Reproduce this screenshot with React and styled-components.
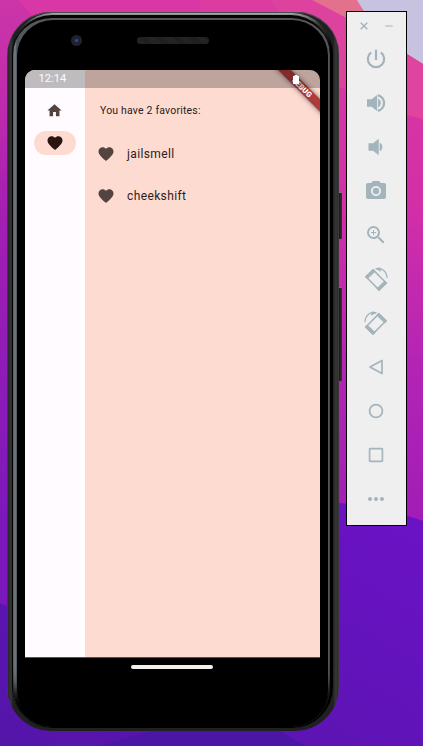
import React from "react";
import styled, { createGlobalStyle } from "styled-components";
import {
  MdHome,
  MdFavorite,
  MdCameraAlt,
  MdZoomIn,
  MdMoreHoriz,
} from "react-icons/md";

const GlobalStyle = createGlobalStyle`
  * { box-sizing: border-box; }
  body { margin: 0; font-family: Roboto, sans-serif; }
`;

const Desktop = styled.main`
  position: relative;
  display: flex;
  align-items: flex-start;
  gap: 7px;
  width: 423px;
  height: 746px;
  padding: 11px 0 0 7px;
  overflow: hidden;
  isolation: isolate;
`;

const WallpaperArt = styled.svg`
  position: absolute;
  inset: 0;
  z-index: -1;
`;

const Shell = styled.section`
  position: relative;
  width: 332px;
  height: 719px;
  margin-top: 1px;
  padding: 1px 6px 3px 5px;
  border-radius: 44px 42px 44px 44px;
  background: linear-gradient(90deg, #4b4b43 0, #292929 1px, #363636 4px, #202020 6px, #202020 326px, #383838 329px, #2a2a2a 331px, #4a4a43 332px);
  box-shadow: inset 0 1px 0 #4b4d4e;
`;

const Groove = styled.div`
  height: 100%;
  padding: 2px 3px 1px 1px;
  border-radius: 41px;
  background: linear-gradient(#aeb1b3 0, #85888a 2px, #333 12px, #000 34px);
`;

const Rim = styled.div`
  height: 100%;
  padding: 2px 2px 0 4px;
  border-radius: 39px;
  background: linear-gradient(90deg, #565e63 0, #7a848a 2px, #4a5359 4px, #55585b 8px, #55585b 312px, #56585a 316px, #444 317px);
  box-shadow: inset 0 -28px 12px -8px #000;
  border-top: 3px solid #050505;
`;

const Face = styled.div`
  display: flex;
  flex-direction: column;
  height: 100%;
  padding: 0 8px;
  border-radius: 36px 36px 38px 38px;
  background: #000;
`;

const Forehead = styled.header`
  display: flex;
  align-items: center;
  height: 50px;
  flex: none;
  padding: 0 0 10px 46px;
  gap: 55px;
`;

const Camera = styled.div`
  width: 11px;
  height: 11px;
  border: 2px solid #242427;
  border-radius: 50%;
  background: radial-gradient(circle, #405088 0, #1d2347 50%, #151723 80%);
`;

const Speaker = styled.div`
  width: 72px;
  height: 7px;
  border-radius: 4px;
  background: repeating-linear-gradient(45deg, #252827 0 1px, #1b1d1d 1px 2px);
`;

const Screen = styled.div`
  position: relative;
  display: flex;
  width: 295px;
  height: 587px;
  flex: none;
  overflow: hidden;
  border-radius: 10px 10px 0 0;
  background: #fedbd1;
`;

const StatusBar = styled.div`
  position: absolute;
  inset: 0 0 auto;
  display: flex;
  justify-content: space-between;
  align-items: center;
  height: 18px;
  padding: 0 21px 0 13.5px;
  background: rgba(0, 0, 0, 0.25);
  color: #fff;
  font-size: 11.2px;
`;

const Clock = styled.time`
  line-height: 18px;
  opacity: 0.94;
`;

const Ribbon = styled.div`
  position: absolute;
  top: 13px;
  left: 242px;
  width: 70px;
  height: 9px;
  transform: rotate(45deg);
  background: #ad3b38;
  box-shadow: 0 0 5px rgba(0, 0, 0, 0.55);
  color: #fff;
  font-size: 7.6px;
  font-weight: 900;
  line-height: 9px;
  text-align: center;
`;

const Rail = styled.nav`
  display: flex;
  flex-direction: column;
  align-items: center;
  gap: 9px;
  width: 60px;
  padding: 28px 1px 0 0;
  background: #fffbff;
`;

const Destination = styled.div`
  display: grid;
  place-items: center;
  width: 42px;
  height: 24px;
  border-radius: 12px;
  background: ${({ $active }) => ($active ? "#fedbd1" : "transparent")};
  color: ${({ $active }) => ($active ? "#2b1510" : "#534440")};
`;

const Favorites = styled.div`
  flex: 1;
  padding-top: 33px;
  color: #2b211e;
`;

const Heading = styled.h1`
  margin: 0 0 15px 15px;
  font-size: 10.5px;
  font-weight: 400;
  line-height: 15px;
  letter-spacing: 0.18px;
`;

const Row = styled.div`
  display: flex;
  align-items: center;
  gap: 12px;
  height: 42px;
  padding: 0 0 1px 12px;
  font-size: 12px;
  letter-spacing: 0.38px;

  svg { color: #534440; flex: none; }
`;

const Chin = styled.footer`
  display: flex;
  justify-content: center;
  padding: 7px 1px 0 0;
  border-top: 1px solid #555;
`;

const HomeBar = styled.div`
  width: 82px;
  height: 4px;
  border-radius: 2px;
  background: #f3f1f0;
`;

const SideKey = styled.i`
  position: absolute;
  left: 332px;
  top: ${({ $top }) => $top}px;
  width: 3px;
  height: ${({ $length }) => $length}px;
  border-radius: 0 1px 1px 0;
  border-top: 1px solid #777;
  background: linear-gradient(90deg, #191919, #343434);
`;

const Toolbar = styled.aside`
  display: flex;
  flex-direction: column;
  align-items: center;
  width: 61px;
  height: 515px;
  padding: 8px 1px 0 0;
  border: 1px solid #000;
  background: #efefef;
  color: #a4b4bc;
`;

const WindowControls = styled.div`
  display: flex;
  justify-content: space-between;
  align-items: center;
  width: 37px;
  height: 12px;
  margin-bottom: 5px;
`;

const Tool = styled.button`
  display: grid;
  place-items: center;
  flex: none;
  width: 44px;
  height: 44px;
  padding: 0;
  border: 0;
  background: none;
  color: inherit;

  svg { display: block; overflow: visible; }
`;

function Wallpaper() {
  return (
    <WallpaperArt width="423" height="746" viewBox="0 0 423 746" aria-hidden="true">
      <defs>
        <linearGradient id="magenta" x1="0" y1="0" x2="0" y2="1">
          <stop offset="0" stopColor="#cc35a8" />
          <stop offset=".15" stopColor="#be2aae" />
          <stop offset=".28" stopColor="#a41fb3" />
          <stop offset=".7" stopColor="#7b18bb" />
        </linearGradient>
        <linearGradient id="right" x1="0" y1="0" x2="0" y2="1">
          <stop offset="0" stopColor="#dc3ca0" />
          <stop offset=".4" stopColor="#d22ea8" />
          <stop offset=".7" stopColor="#b324b5" />
          <stop offset="1" stopColor="#a01db5" />
        </linearGradient>
        <linearGradient id="violet" x1="0" y1="1" x2="1" y2="0">
          <stop offset="0" stopColor="#5415a8" />
          <stop offset="1" stopColor="#6c12c7" />
        </linearGradient>
      </defs>
      <path fill="url(#magenta)" d="M0 0H423V746H0z" />
      <path fill="#d936a6" d="M18 0H330V20H36z" />
      <path fill="url(#right)" d="M200 0H423V525H200z" />
      <path fill="#dd439e" d="M270 0H423V119L339 87z" />
      <path fill="#e3708d" d="M312 0H358L370 30Z" />
      <path fill="#c6c2df" d="M357 0H423V64L407 54L364 12z" />
      <path fill="#df459f" d="M407 54L423 64V119L407 115z" />
      <path fill="url(#violet)" d="M0 603L7 606Q120 480 339 503Q382 506 423 521V746H0z" />
      <path fill="#4b16a5" d="M150 731H280L305 746H100z" />
    </WallpaperArt>
  );
}

function RotateGlyph({ mirrored = false }) {
  return (
    <svg width="24" height="24" viewBox="0 0 24 24" fill="none" stroke="currentColor">
      <g transform={mirrored ? "translate(24 0) scale(-1 1)" : undefined}>
        <path strokeWidth="1.5" strokeLinejoin="round" d="M9.2 2.9L2 9.8L15 22.9L22.2 16z" />
        <path fill="currentColor" strokeWidth=".5" strokeLinejoin="round" d="M9.2 2L1 9.8L3.3 12.1L11.5 4.3zM20.7 13.8L12.7 21.5L15 23.9L23.2 16z" />
        <path strokeWidth="1.3" d="M12 1.8C17.5.2 22.6 4.2 23.2 10.9" />
        <path fill="currentColor" stroke="none" d="M10.7 1.4L16.2.5L17 4.8z" />
      </g>
    </svg>
  );
}

function VolumeGlyph({ loud = false }) {
  return (
    <svg width="24" height="24" viewBox="0 0 24 24" fill="currentColor">
      <g transform={loud ? undefined : "translate(1.5 0)"}>
        <path d="M3 8.3V15.7H7.6L13.2 20.3V3.7L7.6 8.3z" />
        <path d="M14.1 7.5A5 5 0 0 1 14.1 16.5z" />
      </g>
      {loud && <path d="M14 3.1A9.1 9.1 0 0 1 14 20.9V18.6A6.9 6.9 0 0 0 14 5.4z" />}
    </svg>
  );
}

const Outline = ({ weight = 1.7, children }) => (
  <svg width="24" height="24" viewBox="0 0 24 24" fill="none" stroke="currentColor" strokeWidth={weight} strokeLinejoin="round">
    {children}
  </svg>
);

const tools = [
  ["Power", <Outline weight={2.2}><path d="M12 2.7V13M7.1 5.3A8.2 8.2 0 1 0 16.9 5.3" /></Outline>],
  ["Volume up", <VolumeGlyph loud />],
  ["Volume down", <VolumeGlyph />],
  ["Take screenshot", <MdCameraAlt size={24} />],
  ["Zoom", <MdZoomIn size={24} />],
  ["Rotate left", <RotateGlyph />],
  ["Rotate right", <RotateGlyph mirrored />],
  ["Back", <Outline><path d="M6 12L18 5.4V18.6z" /></Outline>],
  ["Home", <Outline><circle cx="12" cy="12" r="6.4" /></Outline>],
  ["Overview", <Outline><rect x="5.6" y="5.6" width="12.8" height="12.8" rx=".6" /></Outline>],
  ["More", <MdMoreHoriz size={24} />],
];

export default function App() {
  return (
    <>
      <GlobalStyle />
      <Desktop>
        <Wallpaper />
        <Shell>
          <Groove>
            <Rim>
              <Face>
                <Forehead>
                  <Camera />
                  <Speaker />
                </Forehead>
                <Screen>
                  <Rail>
                    <Destination><MdHome size={17} /></Destination>
                    <Destination $active><MdFavorite size={18} /></Destination>
                  </Rail>
                  <Favorites>
                    <Heading>You have 2 favorites:</Heading>
                    {["jailsmell", "cheekshift"].map((pair) => (
                      <Row key={pair}><MdFavorite size={18} />{pair}</Row>
                    ))}
                  </Favorites>
                  <Ribbon>DEBUG</Ribbon>
                  <StatusBar>
                    <Clock>12:14</Clock>
                    <svg width="6" height="9" viewBox="0 0 6 9" fill="#fff"><path d="M1.5 0h3v1H6v8H0V1h1.5z" /></svg>
                  </StatusBar>
                </Screen>
                <Chin><HomeBar /></Chin>
              </Face>
            </Rim>
          </Groove>
          <SideKey $top={180} $length={47} />
          <SideKey $top={275} $length={94} />
        </Shell>
        <Toolbar>
          <WindowControls>
            <svg width="12" height="12" viewBox="0 0 12 12" stroke="#a6b5bc" strokeWidth="1.5"><path d="M2.7 2.7L9.3 9.3M9.3 2.7L2.7 9.3" /></svg>
            <svg width="12" height="12" viewBox="0 0 12 12" stroke="#bac5ca" strokeWidth="1.4"><path d="M2.3 6H9.7" /></svg>
          </WindowControls>
          {tools.map(([label, icon]) => (
            <Tool key={label} aria-label={label}>{icon}</Tool>
          ))}
        </Toolbar>
      </Desktop>
    </>
  );
}
